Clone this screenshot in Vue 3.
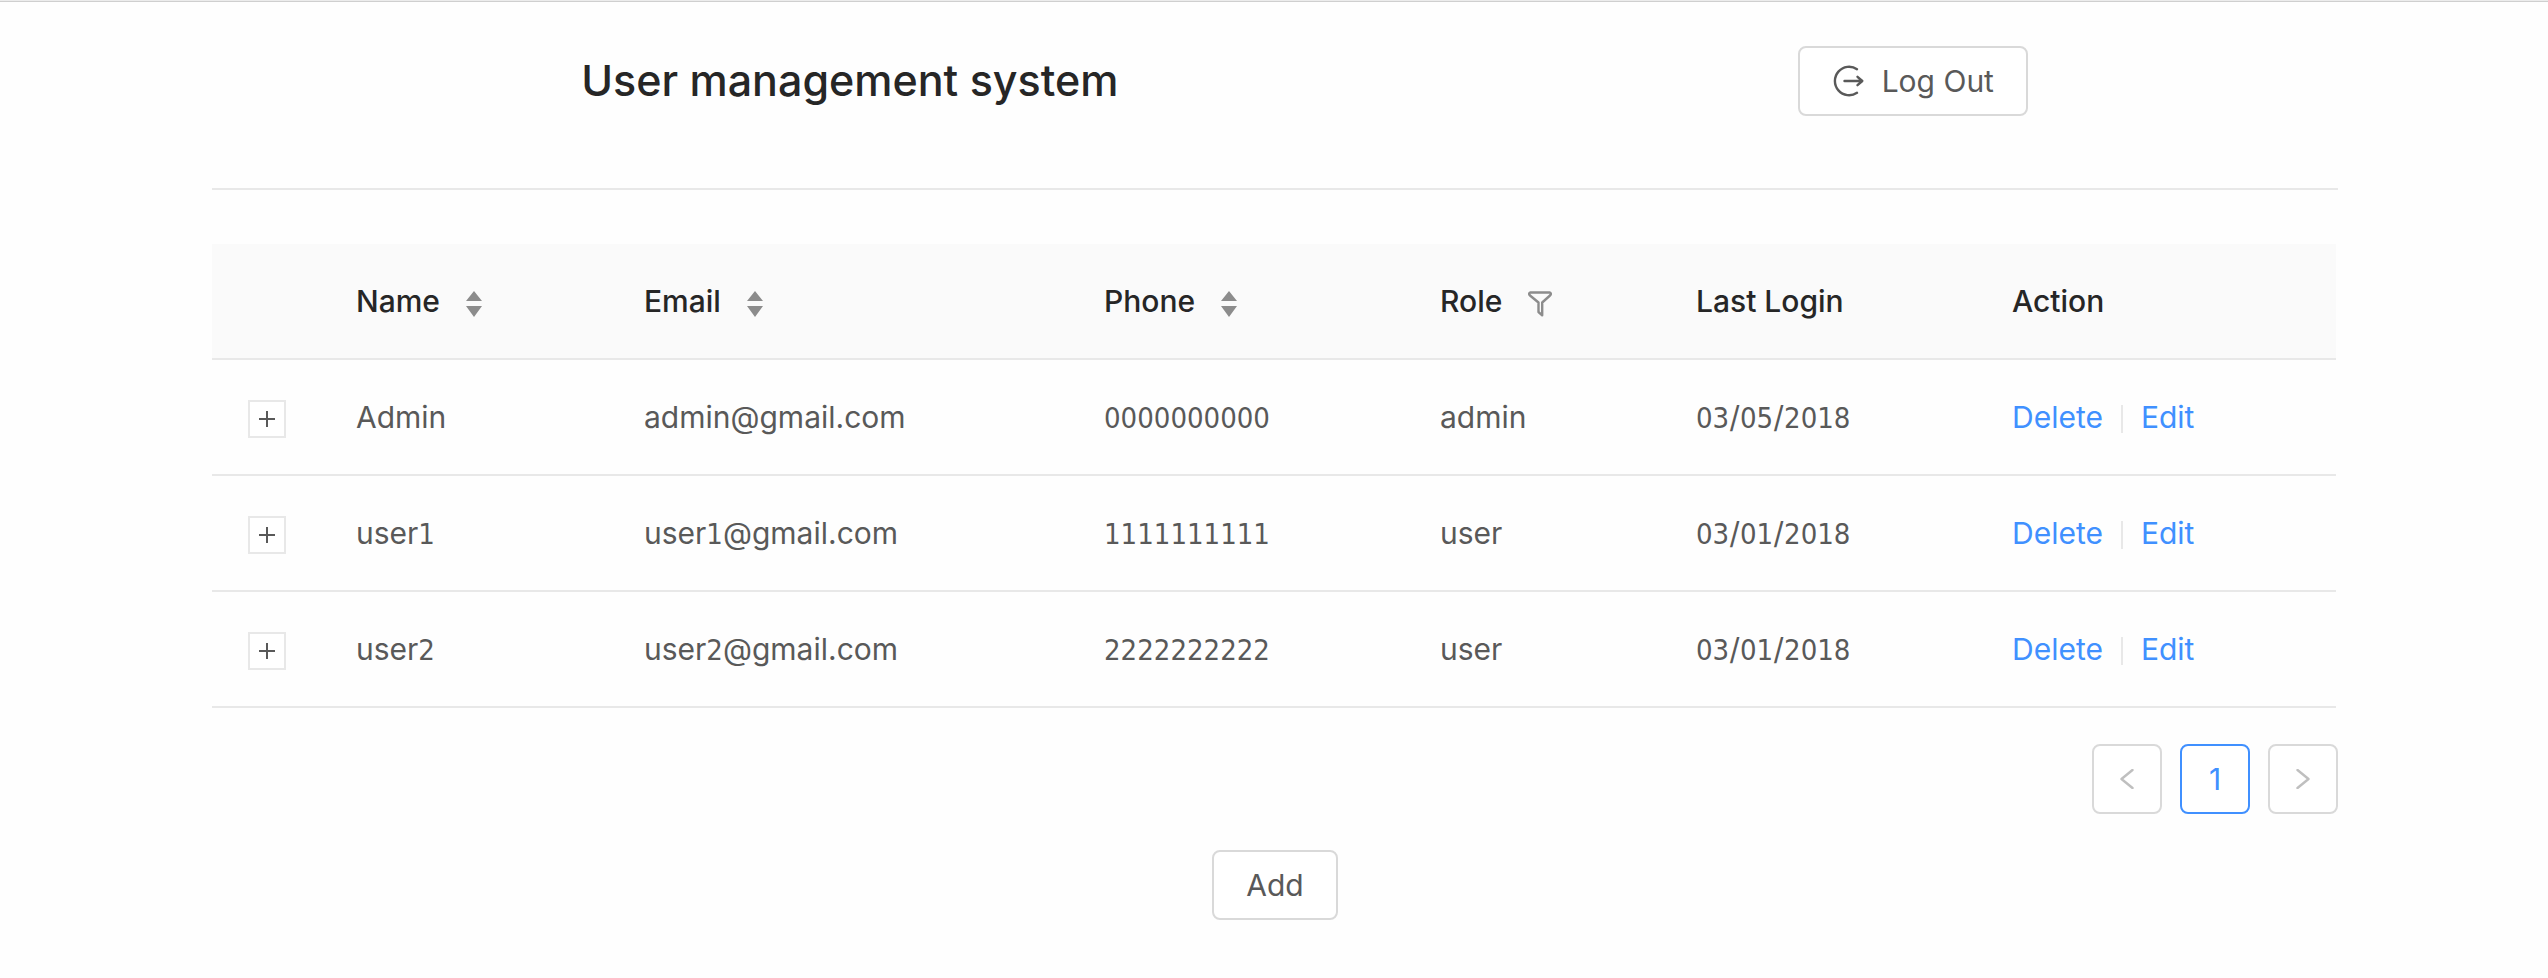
<script setup>
const columns = [
  { title: 'Name', icon: 'sort' },
  { title: 'Email', icon: 'sort' },
  { title: 'Phone', icon: 'sort' },
  { title: 'Role', icon: 'filter' },
  { title: 'Last Login' },
  { title: 'Action' },
]

const users = [
  { name: 'Admin', email: 'admin@gmail.com', phone: '0000000000', role: 'admin', lastLogin: '03/05/2018' },
  { name: 'user1', email: 'user1@gmail.com', phone: '1111111111', role: 'user', lastLogin: '03/01/2018' },
  { name: 'user2', email: 'user2@gmail.com', phone: '2222222222', role: 'user', lastLogin: '03/01/2018' },
]

const fields = ['name', 'email', 'phone', 'role', 'lastLogin']

// Digits are set in a tabular face, so a value is cut into digit and text runs.
const runs = (value) => value.match(/\d+|\D+/g).map((text) => ({ text, digits: /\d/.test(text) }))
</script>

<template>
  <div class="page">
    <header class="top">
      <h1>User management system</h1>
      <button type="button" class="btn">
        <svg class="icon-logout" viewBox="0 0 32 32" aria-hidden="true">
          <path d="M25 4.200A14.200 14.200 0 1 0 25 27.800" />
          <path d="M12.500 16H30M25.500 11.800L30.300 16L25.500 20.200" />
        </svg>
        <span>Log Out</span>
      </button>
    </header>

    <main>
      <table>
        <colgroup>
          <col class="c-expand" />
          <col class="c-name" />
          <col class="c-email" />
          <col class="c-phone" />
          <col class="c-role" />
          <col class="c-login" />
          <col class="c-action" />
        </colgroup>
        <thead>
          <tr>
            <th></th>
            <th v-for="col in columns" :key="col.title" scope="col">
              <div class="head">
                <span>{{ col.title }}</span>
                <button v-if="col.icon === 'sort'" type="button" class="tool" :aria-label="`Sort by ${col.title}`">
                  <svg class="icon-sort" viewBox="0 0 16 26" aria-hidden="true">
                    <path d="M8 0L16 10H0ZM8 26L16 15H0Z" />
                  </svg>
                </button>
                <button v-if="col.icon === 'filter'" type="button" class="tool" :aria-label="`Filter by ${col.title}`">
                  <svg class="icon-filter" viewBox="0 0 24 26" aria-hidden="true">
                    <path d="M2.500 1.500H21.500Q24 2.300 22 4.500L14.200 11.500V24.300L10.500 21V11.500L2 4.500Q0 2.300 2.500 1.500Z" />
                  </svg>
                </button>
              </div>
            </th>
          </tr>
        </thead>
        <tbody>
          <tr v-for="user in users" :key="user.name">
            <td>
              <button type="button" class="expand" :aria-label="`Expand ${user.name}`">
                <svg viewBox="0 0 16 16" aria-hidden="true"><path d="M0 8H16M8 0V16" /></svg>
              </button>
            </td>
            <td v-for="field in fields" :key="field">
              <span v-for="(run, i) in runs(user[field])" :key="i" :class="{ num: run.digits }">{{ run.text }}</span>
            </td>
            <td>
              <div class="actions">
                <a href="#">Delete</a>
                <span class="divider"></span>
                <a href="#">Edit</a>
              </div>
            </td>
          </tr>
        </tbody>
      </table>

      <nav class="pager" aria-label="Pagination">
        <button type="button" class="page-btn" aria-label="Previous page">
          <svg viewBox="0 0 14 20" aria-hidden="true"><path d="M12.500 1L1.500 10L12.500 19" /></svg>
        </button>
        <button type="button" class="page-btn current" aria-current="page">1</button>
        <button type="button" class="page-btn" aria-label="Next page">
          <svg viewBox="0 0 14 20" aria-hidden="true"><path d="M1.500 1L12.500 10L1.500 19" /></svg>
        </button>
      </nav>

      <div class="footer">
        <button type="button" class="btn">Add</button>
      </div>
    </main>
  </div>
</template>

<style>
body {
  background: #fefefe;
}
</style>

<style scoped>
.page {
  border-top: 1px solid #ececec;
  padding: 0 210px 0 212px;
  font-family: Inter, Roboto, "Liberation Sans", sans-serif;
  font-size: 30px;
  line-height: 46px;
  color: #595959;
  box-shadow: inset 0 1px 0 #cfcfcf;
}

.top {
  display: grid;
  grid-template-columns: 3fr 2fr;
  justify-items: center;
  align-items: start;
  padding: 45px 0 72px;
  border-bottom: 2px solid #e8e8e8;
  margin-bottom: 54px;
}

h1 {
  margin: 0;
  font-size: 43px;
  line-height: 68px;
  font-weight: 500;
  color: #262626;
}

button {
  font: inherit;
  color: inherit;
  cursor: pointer;
}

svg {
  display: block;
  fill: none;
  stroke: currentColor;
}

.btn {
  display: flex;
  align-items: center;
  gap: 18px;
  height: 70px;
  padding: 0 32px;
  border: 2px solid #d9d9d9;
  border-radius: 8px;
  background: #fff;
}

.icon-logout {
  width: 32px;
  height: 32px;
  stroke-width: 2.4;
  stroke-linecap: round;
  stroke-linejoin: round;
}

table {
  width: calc(100% - 2px);
  table-layout: fixed;
  border-collapse: separate;
  border-spacing: 0;
}

.c-expand { width: 110px; }
.c-name { width: 288px; }
.c-email { width: 460px; }
.c-phone { width: 336px; }
.c-role { width: 256px; }
.c-login { width: 316px; }
.c-action { width: 358px; }

th,
td {
  height: 46px;
  padding: 34px;
  border-bottom: 2px solid #e8e8e8;
  text-align: left;
  white-space: nowrap;
}

td:first-child {
  padding-left: 36px;
}

th {
  background: #fafafa;
  font-weight: 500;
  color: #262626;
}

.head {
  display: flex;
  align-items: center;
  gap: 26px;
}

.tool {
  padding: 6px 0 0;
  border: 0;
  background: none;
  color: #8c8c8c;
}

.icon-sort {
  width: 16px;
  height: 26px;
  fill: currentColor;
  stroke: none;
}

.icon-filter {
  width: 24px;
  height: 26px;
  stroke-width: 2.4;
  stroke-linejoin: round;
}

.num {
  font-family: "DejaVu Sans Condensed", "DejaVu Sans", sans-serif;
  font-size: 29px;
  line-height: 1;
}

.expand {
  display: flex;
  align-items: center;
  justify-content: center;
  width: 38px;
  height: 38px;
  margin-top: 4px;
  padding: 0;
  border: 2px solid #e8e8e8;
  background: #fff;
}

.expand svg {
  width: 16px;
  height: 16px;
  stroke-width: 2;
}

.actions {
  display: flex;
  align-items: center;
  gap: 18px;
}

.actions a {
  color: #4090ff;
  text-decoration: none;
}

.divider {
  width: 2px;
  height: 28px;
  margin-top: 4px;
  background: #e8e8e8;
}

.pager {
  display: flex;
  justify-content: flex-end;
  gap: 18px;
  margin-top: 36px;
}

.page-btn {
  display: flex;
  align-items: center;
  justify-content: center;
  width: 70px;
  height: 70px;
  padding: 0;
  border: 2px solid #d9d9d9;
  border-radius: 8px;
  background: #fff;
  color: #bfbfbf;
}

.page-btn svg {
  width: 14px;
  height: 20px;
  stroke-width: 2.4;
  stroke-linecap: round;
  stroke-linejoin: round;
}

.page-btn.current {
  border-color: #4090ff;
  color: #4090ff;
}

.footer {
  display: flex;
  justify-content: center;
  padding: 36px 0 58px;
}
</style>
